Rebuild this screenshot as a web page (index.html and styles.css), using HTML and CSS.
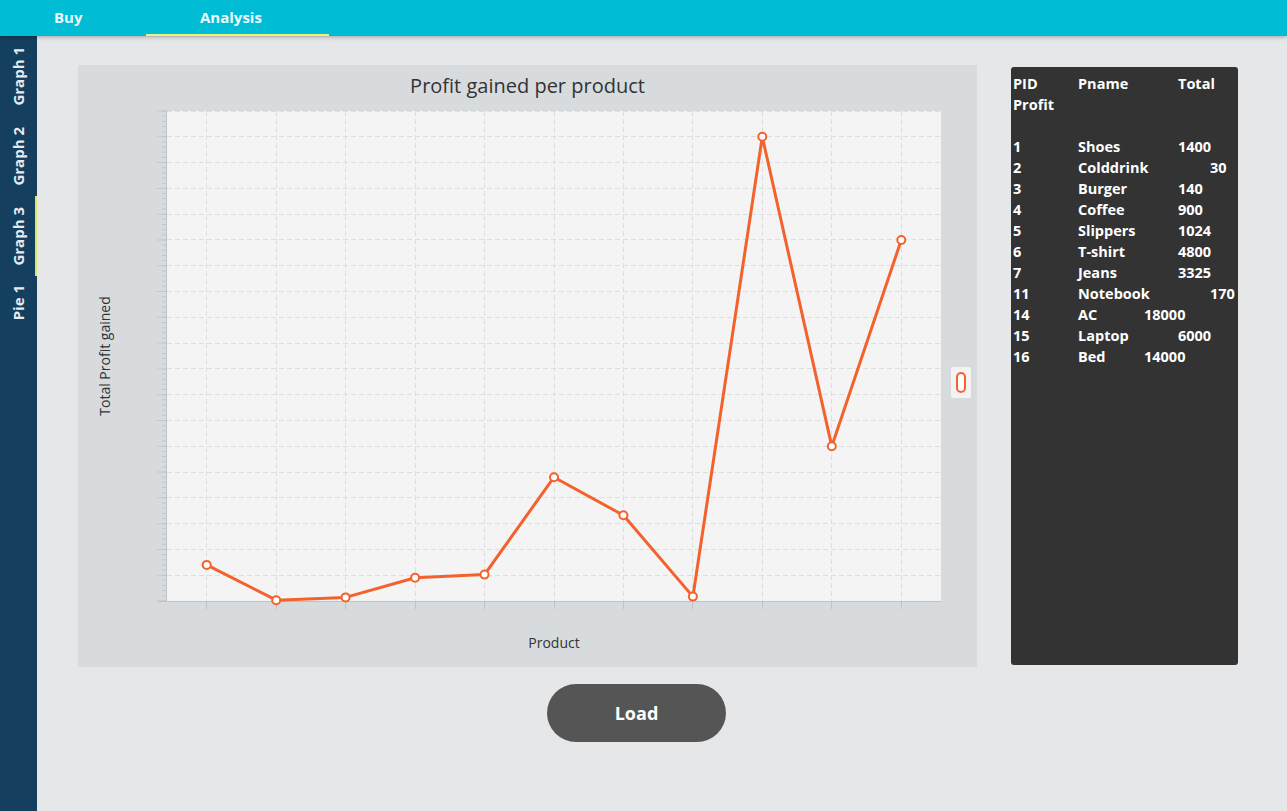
FILE: index.html
```html
<!DOCTYPE html>
<html lang="en">
<head>
<meta charset="utf-8">
<title>Analysis</title>
<link rel="stylesheet" href="styles.css">
</head>
<body>
<header class="topbar">
  <div class="top-tab tab-buy">Buy</div>
  <div class="top-tab tab-analysis active">Analysis</div>
</header>
<div class="body-row">
  <nav class="sidebar">
    <div class="side-tab"><span>Graph 1</span></div>
    <div class="side-tab"><span>Graph 2</span></div>
    <div class="side-tab active"><span>Graph 3</span></div>
    <div class="side-tab"><span>Pie 1</span></div>
  </nav>
  <main class="content">
    <section class="left-col">
      <div class="chart-panel">
        <svg class="chart" width="899" height="602" viewBox="0 0 899 602">
          <text class="chart-title" x="449.5" y="28" text-anchor="middle">Profit gained per product</text>
          <rect x="89" y="46" width="774" height="490" fill="#f4f4f4"/>
          <path class="grid" d="M89 510.5H863M89 484.5H863M89 458.5H863M89 432.5H863M89 407.5H863M89 381.5H863M89 355.5H863M89 329.5H863M89 303.5H863M89 278.5H863M89 252.5H863M89 226.5H863M89 200.5H863M89 174.5H863M89 149.5H863M89 123.5H863M89 97.5H863M89 71.5H863M89 46.5H863"/>
          <path class="grid" d="M128.5 46V536M198.5 46V536M267.5 46V536M337.5 46V536M406.5 46V536M476.5 46V536M545.5 46V536M614.5 46V536M684.5 46V536M753.5 46V536M823.5 46V536"/>
          <line class="tick-minor" x1="86.5" y1="536.5" x2="86.5" y2="45" />
          <line class="tick-major" x1="84" y1="536.5" x2="84" y2="45" />
          <line class="axis" x1="88.5" y1="46" x2="88.5" y2="536"/>
          <line class="axis" x1="80" y1="536.5" x2="863" y2="536.5"/>
          <path class="axis" d="M128.5 537V544M198.5 537V544M267.5 537V544M337.5 537V544M406.5 537V544M476.5 537V544M545.5 537V544M614.5 537V544M684.5 537V544M753.5 537V544M823.5 537V544"/>
          <polyline class="series" points="128.7,499.9 198.2,535.2 267.6,532.4 337.1,512.8 406.5,509.6 476,412.2 545.4,450.3 614.9,531.6 684.3,71.8 753.8,381.3 823.3,175"/>
          <g class="symbols">
            <circle cx="128.7" cy="499.9" r="4"/>
            <circle cx="198.2" cy="535.2" r="4"/>
            <circle cx="267.6" cy="532.4" r="4"/>
            <circle cx="337.1" cy="512.8" r="4"/>
            <circle cx="406.5" cy="509.6" r="4"/>
            <circle cx="476" cy="412.2" r="4"/>
            <circle cx="545.4" cy="450.3" r="4"/>
            <circle cx="614.9" cy="531.6" r="4"/>
            <circle cx="684.3" cy="71.8" r="4"/>
            <circle cx="753.8" cy="381.3" r="4"/>
            <circle cx="823.3" cy="175" r="4"/>
          </g>
          <text class="axis-label" x="476" y="583" text-anchor="middle">Product</text>
          <text class="axis-label" x="0" y="0" text-anchor="middle" transform="translate(32 291) rotate(-90)">Total Profit gained</text>
          <rect class="legend-box" x="873" y="302" width="20" height="31" rx="2"/>
          <rect class="legend-symbol" x="879" y="308" width="8" height="19" rx="4"/>
        </svg>
      </div>
      <div class="button-row">
        <button class="load-btn">Load</button>
      </div>
    </section>
    <section class="table-panel">
      <div class="trow"><span class="c1">PID</span><span class="c2">Pname</span><span class="at4">Total</span></div>
      <div class="trow"><span class="c1">Profit</span></div>
      <div class="trow blank"></div>
      <div class="trow"><span class="c1">1</span><span class="c2">Shoes</span><span class="at4">1400</span></div>
      <div class="trow"><span class="c1">2</span><span class="c2">Colddrink</span><span class="at5">30</span></div>
      <div class="trow"><span class="c1">3</span><span class="c2">Burger</span><span class="at4">140</span></div>
      <div class="trow"><span class="c1">4</span><span class="c2">Coffee</span><span class="at4">900</span></div>
      <div class="trow"><span class="c1">5</span><span class="c2">Slippers</span><span class="at4">1024</span></div>
      <div class="trow"><span class="c1">6</span><span class="c2">T-shirt</span><span class="at4">4800</span></div>
      <div class="trow"><span class="c1">7</span><span class="c2">Jeans</span><span class="at4">3325</span></div>
      <div class="trow"><span class="c1">11</span><span class="c2">Notebook</span><span class="at5">170</span></div>
      <div class="trow"><span class="c1">14</span><span class="c2">AC</span><span class="at3">18000</span></div>
      <div class="trow"><span class="c1">15</span><span class="c2">Laptop</span><span class="at4">6000</span></div>
      <div class="trow"><span class="c1">16</span><span class="c2">Bed</span><span class="at3">14000</span></div>
    </section>
  </main>
</div>
</body>
</html>
```
FILE: styles.css
```css
* { box-sizing: border-box; }
html, body {
  margin: 0;
  padding: 0;
  height: 100%;
}
body {
  font-family: "Open Sans", "Noto Sans", "Liberation Sans", sans-serif;
  background: #e6e7e9;
  overflow: hidden;
  display: flex;
  flex-direction: column;
}
.topbar {
  height: 36px;
  flex: 0 0 36px;
  background: #00bcd4;
  display: flex;
  position: relative;
  z-index: 2;
  box-shadow: 0 1px 4px rgba(0,0,0,0.3);
}
.top-tab {
  height: 36px;
  color: #eafafc;
  font-weight: 700;
  font-size: 15px;
  line-height: 34px;
  border-bottom: 2px solid transparent;
}
.tab-buy { width: 146px; padding-left: 54px; }
.tab-analysis { width: 183px; padding-left: 54px; }
.top-tab.active { border-bottom-color: #e8f27f; }

.body-row {
  flex: 1;
  display: flex;
  min-height: 0;
}
.sidebar {
  width: 37px;
  flex: 0 0 37px;
  background: #153f5e;
  display: flex;
  flex-direction: column;
}
.side-tab {
  width: 37px;
  height: 80px;
  display: flex;
  align-items: center;
  justify-content: center;
  border-right: 2px solid transparent;
  padding-left: 1px;
}
.side-tab:last-child { height: 54px; }
.side-tab.active { border-right-color: #d8e86a; }
.side-tab span {
  writing-mode: vertical-rl;
  transform: rotate(180deg);
  color: #e3eaf0;
  font-weight: 700;
  font-size: 15px;
  line-height: 17px;
  white-space: nowrap;
}

.content {
  flex: 1;
  display: flex;
  align-items: flex-start;
  gap: 34px;
  padding: 29px 0 0 41px;
}
.left-col {
  width: 899px;
  display: flex;
  flex-direction: column;
}
.chart-panel {
  width: 899px;
  height: 602px;
  background: #d8dbde;
}
.chart { display: block; }
.chart-title {
  font-family: "Open Sans", "Noto Sans", sans-serif;
  font-size: 20px;
  fill: #333333;
}
.axis-label {
  font-family: "Open Sans", "Noto Sans", sans-serif;
  font-size: 14px;
  fill: #333333;
}
.grid {
  fill: none;
  stroke: #dedede;
  stroke-width: 1;
  stroke-dasharray: 5 3;
}
.tick-minor {
  stroke: #c4c6c8;
  stroke-width: 5;
  stroke-dasharray: 1 4.1579;
}
.tick-major {
  stroke: #c4c6c8;
  stroke-width: 10;
  stroke-dasharray: 1 24.789;
}
.axis {
  fill: none;
  stroke: #bfc1c3;
  stroke-width: 1;
}
.series {
  fill: none;
  stroke: #f3622d;
  stroke-width: 3;
  stroke-linejoin: round;
}
.symbols circle {
  fill: #ffffff;
  stroke: #f3622d;
  stroke-width: 2;
}
.legend-box {
  fill: #f3f3f3;
}
.legend-symbol {
  fill: #ffffff;
  stroke: #f3622d;
  stroke-width: 2;
}
.button-row {
  display: flex;
  padding: 17px 0 0 469px;
}
.load-btn {
  width: 179px;
  height: 58px;
  border: none;
  border-radius: 29px;
  background: #555555;
  color: #ffffff;
  font-family: "Open Sans", "Noto Sans", sans-serif;
  font-weight: 700;
  font-size: 18px;
  padding: 0;
}
.table-panel {
  width: 227px;
  height: 598px;
  margin-top: 2px;
  background: #333333;
  border-radius: 3px;
  padding: 6px 0 0 2px;
  color: #ffffff;
  font-weight: 700;
  font-size: 14.5px;
}
.trow {
  display: grid;
  grid-template-columns: 65px 66px 34px 32px 30px;
  height: 21px;
  line-height: 21px;
  white-space: nowrap;
}
.c1 { grid-column: 1; }
.c2 { grid-column: 2; }
.at3 { grid-column: 3; }
.at4 { grid-column: 4; }
.at5 { grid-column: 5; }
```
